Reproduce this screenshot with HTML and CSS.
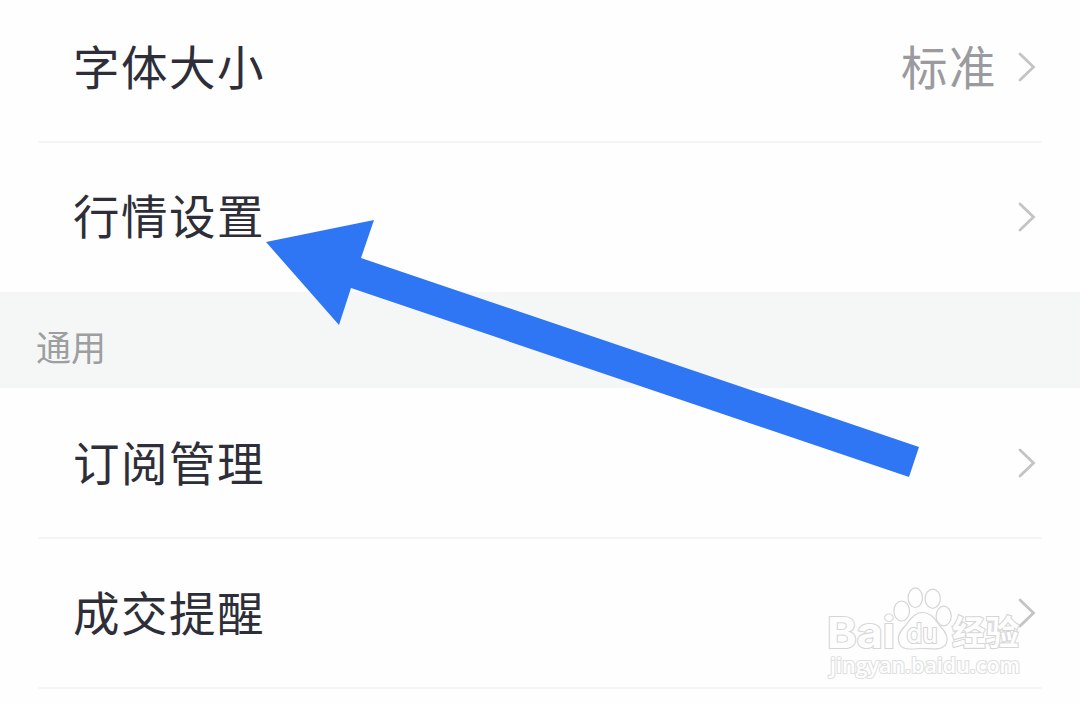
FILE: index.html
```html
<!DOCTYPE html>
<html lang="zh-CN">
<head>
    <meta charset="UTF-8">
    <title>设置</title>
    <link rel="stylesheet" href="styles.css">
</head>

<body>
<div class="settings">
    <div class="group group--first">
        <div class="row">
            <span class="row__title">字体大小</span>
            <span class="row__value">标准</span>
            <svg class="chevron" viewBox="0 0 20 32"><path d="M3 3 L16.5 16 L3 29"/></svg>
        </div>
        <div class="row row--last">
            <span class="row__title">行情设置</span>
            <svg class="chevron" viewBox="0 0 20 32"><path d="M3 3 L16.5 16 L3 29"/></svg>
        </div>
    </div>

    <div class="section-title">通用</div>

    <div class="group group--general">
        <div class="row">
            <span class="row__title">订阅管理</span>
            <svg class="chevron" viewBox="0 0 20 32"><path d="M3 3 L16.5 16 L3 29"/></svg>
        </div>
        <div class="row">
            <span class="row__title">成交提醒</span>
            <svg class="chevron" viewBox="0 0 20 32"><path d="M3 3 L16.5 16 L3 29"/></svg>
        </div>
    </div>

    <!-- arrow pointing at the second row -->
    <svg class="arrow" viewBox="0 0 654 258">
        <polygon points="0,22 108,0 95,38 653,227 643,257 85,68 73,105"/>
    </svg>

    <svg class="watermark" viewBox="0 0 210 100">
        <text class="watermark__brand" x="7" y="62" font-size="43" textLength="68" lengthAdjust="spacingAndGlyphs">Bai</text>
        <g class="watermark__paw">
            <ellipse cx="81.7" cy="25" rx="7.8" ry="10"/>
            <ellipse cx="95.3" cy="11.7" rx="7.2" ry="9.8"/>
            <ellipse cx="112.7" cy="12.7" rx="7.6" ry="9.6"/>
            <ellipse cx="123.7" cy="30" rx="7.6" ry="9.8"/>
            <path d="M102.500 26.500 C111 26.500 116 34 120 40 C125 45 129 52 126 58 C122 65 111 62.500 102.500 62.500 C94 62.500 84 65 80 59 C76 52 80 45 85 40 C90 34 94 26.500 102.500 26.500 Z"/>
        </g>
        <text class="watermark__du" x="86.500" y="57" font-size="27" textLength="31" lengthAdjust="spacingAndGlyphs">du</text>
        <text class="watermark__cn" x="132" y="59" font-size="34" textLength="67" lengthAdjust="spacingAndGlyphs">经验</text>
        <text class="watermark__url" x="10" y="87" font-size="22" textLength="190" lengthAdjust="spacingAndGlyphs">jingyan.baidu.com</text>
    </svg>
</div>
</body>
</html>
```
FILE: styles.css
```css
html, body {
    margin: 0;
    padding: 0;
    background-color: #fefefe;
    font-family: "Noto Sans CJK SC", "Noto Sans", sans-serif;
}

.settings {
    position: relative;
    height: 703px;
    overflow: hidden;
}

.group {
    padding: 0 38px;
}

.group--first {
    margin-top: -7px;
}

.group--general {
    margin-top: 1px;
}

.row {
    display: flex;
    align-items: center;
    box-sizing: border-box;
    height: 150px;
    padding: 0 5px 0 35px;
    border-bottom: 2px solid #f5f5f5;
}

.row--last {
    height: 149px;
    border-bottom-color: transparent;
}

.row__title {
    flex: 1;
    padding-bottom: 5px;
    font-size: 46.5px;
    line-height: 60px;
    letter-spacing: 1.5px;
    color: #2e2e38;
}

.row__value {
    margin-right: 20px;
    padding-bottom: 5px;
    font-size: 46.5px;
    line-height: 60px;
    letter-spacing: 1.5px;
    color: #9b9b9f;
}

.chevron {
    width: 20px;
    height: 32px;
    fill: none;
    stroke: #c4c4c4;
    stroke-width: 2.8;
    stroke-linecap: round;
}

.section-title {
    display: flex;
    align-items: center;
    box-sizing: border-box;
    height: 96px;
    padding: 11px 36px 0;
    background-color: #f5f6f6;
    font-size: 35px;
    line-height: 50px;
    color: #9c9e9f;
}

.arrow {
    position: absolute;
    left: 266px;
    top: 220px;
    width: 654px;
    height: 258px;
    fill: #2f76f5;
}

.watermark {
    position: absolute;
    left: 820px;
    top: 586px;
    width: 210px;
    height: 100px;
    fill: #fefefe;
    stroke: #d6d6d6;
    stroke-width: 1.2;
}

.watermark text {
    paint-order: stroke;
    stroke-width: 2.2;
}

.watermark__brand {
    font-family: Inter, sans-serif;
    font-weight: 700;
}

.watermark__du {
    font-family: Inter, sans-serif;
    font-weight: 500;
}

.watermark__cn {
    font-weight: 700;
}

.watermark__url {
    font-family: "Open Sans", sans-serif;
    font-weight: 600;
    stroke: #e0e0e0;
}
```
